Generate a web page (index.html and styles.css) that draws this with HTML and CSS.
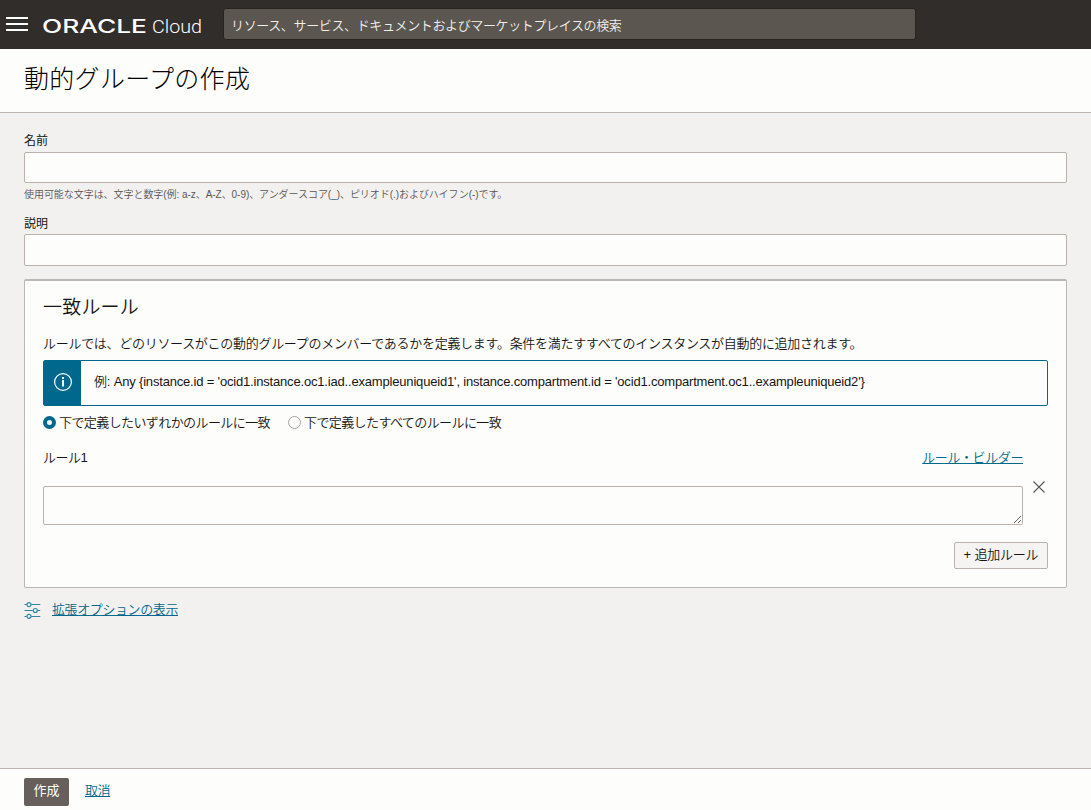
FILE: index.html
```
<!DOCTYPE html>
<html lang="ja">
<head>
  <meta charset="UTF-8">
  <meta name="viewport" content="width=device-width, initial-scale=1.0">
  <title>動的グループの作成</title>
  <link rel="stylesheet" href="styles.css">
</head>
<body>
  <header class="topbar">
    <button class="menu-btn" type="button" aria-label="メニュー"><span></span><span></span><span></span></button>
    <svg class="logo" width="162" height="24" viewBox="0 0 162 24">
      <text class="logo-oracle" x="-1" y="20" textLength="105" lengthAdjust="spacingAndGlyphs">ORACLE</text>
      <text class="logo-cloud" x="109" y="20" textLength="50" lengthAdjust="spacingAndGlyphs">Cloud</text>
    </svg>
    <input class="search" type="text" placeholder="リソース、サービス、ドキュメントおよびマーケットプレイスの検索">
  </header>

  <div class="title-bar">
    <h1>動的グループの作成</h1>
  </div>

  <main class="content">
    <label class="field-label" for="name">名前</label>
    <input class="field name-field" id="name" type="text">
    <p class="hint">使用可能な文字は、文字と数字(例: a-z、A-Z、0-9)、アンダースコア(_)、ピリオド(.)およびハイフン(-)です。</p>

    <label class="field-label" for="description">説明</label>
    <input class="field" id="description" type="text">

    <section class="panel">
      <h2>一致ルール</h2>
      <p class="panel-text">ルールでは、どのリソースがこの動的グループのメンバーであるかを定義します。条件を満たすすべてのインスタンスが自動的に追加されます。</p>

      <div class="info">
        <div class="info-icon">
          <svg width="20" height="20" viewBox="0 0 20 20" fill="none" stroke="#fff">
            <circle cx="10" cy="10" r="8.4" stroke-width="1.2"/>
            <path d="M10 8v6.500" stroke-width="1.9"/>
            <path d="M10 5v2" stroke-width="1.9"/>
          </svg>
        </div>
        <div class="info-text">例: Any {instance.id = 'ocid1.instance.oc1.iad..exampleuniqueid1', instance.compartment.id = 'ocid1.compartment.oc1..exampleuniqueid2'}</div>
      </div>

      <div class="radios">
        <label><input type="radio" name="match" checked>下で定義したいずれかのルールに一致</label>
        <label><input type="radio" name="match">下で定義したすべてのルールに一致</label>
      </div>

      <div class="rule-head">
        <label for="rule1">ルール1</label>
        <a class="builder-link" href="#">ルール・ビルダー</a>
      </div>
      <div class="rule-row">
        <textarea id="rule1"></textarea>
        <button class="remove-btn" type="button" aria-label="削除">
          <svg width="12" height="12" viewBox="0 0 12 12" stroke="#5b5652" stroke-width="1.1"><path d="M.5.5l11 11M11.5.5l-11 11"/></svg>
        </button>
      </div>
      <div class="panel-actions">
        <button class="add-btn" type="button">+ 追加ルール</button>
      </div>
    </section>

    <div class="advanced">
      <svg width="17" height="17" viewBox="0 0 17 17" fill="none" stroke="#2f86a3" stroke-width="1.2">
        <path d="M.5 2.500h2.200M7.300 2.500h9M.5 8.500h8.200M13.700 8.500h2.500M.5 14.500h2.200M7.300 14.500h9"/>
        <circle cx="5" cy="2.700" r="2"/>
        <circle cx="11.300" cy="8.500" r="2"/>
        <circle cx="5" cy="14.300" r="2"/>
      </svg>
      <a href="#">拡張オプションの表示</a>
    </div>
  </main>

  <footer class="footer">
    <button class="create-btn" type="button">作成</button>
    <a href="#">取消</a>
  </footer>
</body>
</html>
```
FILE: styles.css
```
* {
  box-sizing: border-box;
}

body {
  margin: 0;
  height: 100vh;
  display: flex;
  flex-direction: column;
  overflow: hidden;
  font-family: "Liberation Sans", "Noto Sans CJK JP", sans-serif;
  font-size: 13px;
  font-weight: 350;
  line-height: 20px;
  color: #161513;
  background: #f3f1f0;
}

button,
input,
textarea {
  font: inherit;
  color: inherit;
}

h1,
h2,
p {
  margin: 0;
  font-weight: 350;
}

a {
  color: #00688c;
  letter-spacing: -0.4px;
}

/* top bar */
.topbar {
  flex: none;
  display: flex;
  align-items: flex-start;
  height: 49px;
  padding-left: 6px;
  background: #312d2a;
}

.menu-btn {
  display: flex;
  flex-direction: column;
  gap: 4px;
  width: 22px;
  margin-top: 17px;
  padding: 0;
  border: none;
  background: none;
}

.menu-btn span {
  height: 2px;
  background: #fff;
}

.logo {
  margin: 13px 0 0 15px;
  fill: #fff;
}

.logo-oracle {
  font: 500 18.5px Inter, sans-serif;
}

.logo-cloud {
  font: 300 19px Roboto, sans-serif;
}

.search {
  width: 693px;
  height: 32px;
  margin: 8px 0 0 18px;
  padding: 2px 7px 0;
  border: 1px solid #27231f;
  border-radius: 3px;
  background: #5b564f;
  letter-spacing: -0.37px;
}

.search::placeholder {
  color: #f1efed;
}

/* title */
.title-bar {
  flex: none;
  height: 64px;
  padding: 12px 24px 0;
  border-bottom: 1px solid #bdb5ae;
  background: #fdfdfb;
}

.title-bar h1 {
  font-size: 25px;
  font-weight: 300;
  line-height: 36px;
  letter-spacing: 0.3px;
  color: #000;
}

/* form */
.content {
  flex: 1;
  padding: 17px 24px 0;
}

.field-label {
  display: block;
  height: 22px;
  padding-top: 1px;
  font-size: 12px;
  font-weight: 400;
}

.field {
  display: block;
  width: 100%;
  height: 32px;
  border: 1px solid #bbb3ab;
  border-radius: 2px;
  background: #fdfdfb;
}

.name-field {
  height: 31px;
}

.hint {
  height: 29px;
  padding-top: 2px;
  font-size: 10px;
  color: #5a5552;
  letter-spacing: -0.05px;
}

.hint + .field-label {
  padding-top: 2px;
}

/* matching rules */
.panel {
  height: 309px;
  margin-top: 13px;
  padding: 0 18px;
  border: 1px solid #bbb7b4;
  border-top-width: 2px;
  border-radius: 2px;
  background: #fdfdfb;
}

.panel h2 {
  padding-top: 13px;
  font-size: 19px;
  line-height: 28px;
  letter-spacing: 0.2px;
}

.panel-text {
  padding-top: 12px;
  letter-spacing: -0.29px;
}

.info {
  display: flex;
  height: 46px;
  margin-top: 6px;
  border: 1px solid #00688c;
  border-radius: 2px;
}

.info-icon {
  display: flex;
  align-items: center;
  justify-content: center;
  width: 37px;
  padding-bottom: 2px;
  background: #00688c;
}

.info-text {
  padding: 11px 13px;
  letter-spacing: -0.18px;
}

.radios {
  display: flex;
  gap: 18px;
  margin-top: 7px;
  letter-spacing: -0.59px;
}

.radios label {
  display: flex;
  align-items: center;
}

.radios input {
  appearance: none;
  width: 13px;
  height: 13px;
  margin: 0 3px 2px 0;
  border: 1px solid #aaa5a0;
  border-radius: 50%;
}

.radios input:checked {
  border: 4.500px solid #00688c;
}

.rule-head {
  display: flex;
  justify-content: space-between;
  margin-top: 15px;
  padding-right: 25px;
  letter-spacing: -0.5px;
}

.rule-row {
  display: flex;
  align-items: flex-start;
  gap: 10px;
  margin-top: 18px;
}

.rule-row textarea {
  flex: 1;
  height: 39px;
  border: 1px solid #bbb3ab;
  border-radius: 2px;
  background: #fdfdfb;
}

.remove-btn {
  display: flex;
  margin: -5px 3px 0 0;
  padding: 0;
  border: none;
  background: none;
}

.panel-actions {
  display: flex;
  justify-content: flex-end;
  margin-top: 17px;
}

.add-btn {
  width: 94px;
  height: 27px;
  padding: 0 0 2px;
  border: 1px solid #bbb3ab;
  border-radius: 2px;
  background: #f5f4f3;
  letter-spacing: -0.2px;
}

.advanced {
  display: flex;
  gap: 11px;
  margin-top: 12px;
}

.advanced svg {
  margin-top: 2px;
}

/* footer */
.footer {
  flex: none;
  display: flex;
  align-items: flex-start;
  gap: 16px;
  height: 42px;
  padding: 9px 24px 0;
  border-top: 1px solid #bdb5ae;
  background: #fdfdfb;
}

.footer a {
  margin-top: 3px;
}

.create-btn {
  width: 45px;
  height: 28px;
  padding: 0 0 3px;
  border: none;
  border-radius: 2px;
  background: #665f5b;
  color: #fff;
  font-weight: 400;
}
```
